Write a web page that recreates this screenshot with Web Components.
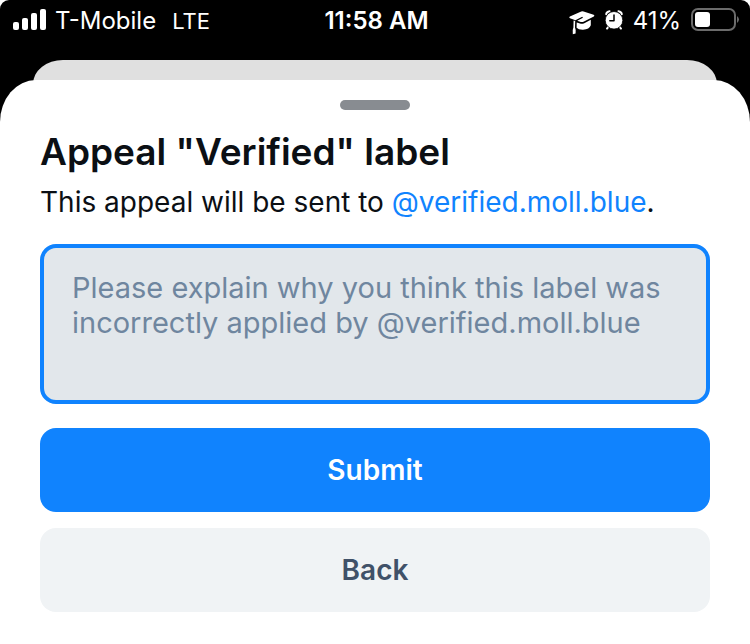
<!DOCTYPE html>
<html lang="en">
<head>
<meta charset="utf-8">
<meta name="viewport" content="width=device-width, initial-scale=1">
<title>Appeal label</title>
<style>
  html { background: #fff; }
  body { margin: 0; font-family: Inter, "Liberation Sans", sans-serif; color: #0b0f14; }
</style>
</head>
<body>
<appeal-screen></appeal-screen>
<script>
const define = (name, html, setup) => {
  const template = document.createElement('template');
  template.innerHTML = html;
  customElements.define(name, class extends HTMLElement {
    constructor() {
      super();
      this.attachShadow({ mode: 'open' }).append(template.content.cloneNode(true));
      if (setup) setup(this);
    }
  });
};

define('signal-icon', `
  <style>:host{display:block} svg{display:block}</style>
  <svg width="34" height="24" viewBox="0 0 34 24" fill="#fff" aria-hidden="true">
    <rect x="0" y="13" width="6" height="8" rx="2"/><rect x="9" y="9" width="6" height="12" rx="2"/>
    <rect x="18" y="4" width="6" height="17" rx="2"/><rect x="27" y="0" width="6" height="21" rx="2"/>
  </svg>`);

define('cap-icon', `
  <style>:host{display:block} svg{display:block}</style>
  <svg width="26" height="28" viewBox="0 -4 26 28" fill="#fff" aria-hidden="true">
    <path d="M12.2.4Q13.4-.1 14.6.4L24.6 3.8Q26 4.5 24.8 5.4L15 10.6Q13 11.5 11 10.8L8.2 9.8 14 6.8 13.2 5.8 6.4 9.2 1 7.2Q-.4 6.4.9 5.5Z"/>
    <path d="M7.7 11.4 11 12.6Q13.2 13.2 15.3 12.2L21.8 8.8V14.2Q20.5 18.4 14 18.7 9.5 18.8 7.6 16.8Z"/>
    <path d="M4.6 9.4 6.2 10 6 16.4Q7 18 6.6 22.6L3.8 23.2Q3.2 18.6 4.4 16.4Z"/>
  </svg>`);

define('alarm-icon', `
  <style>:host{display:block} svg{display:block}</style>
  <svg width="18" height="22" viewBox="0 0 18 22" aria-hidden="true">
    <g fill="none" stroke="#fff" stroke-width="2" stroke-linecap="round"><path d="M1.2 4.2Q1.6 1.6 4.6 1.2M16.8 4.2Q16.4 1.6 13.4 1.2M3.8 16.4 2 18.6M14.2 16.4 16 18.6"/></g>
    <circle cx="9" cy="10.3" r="8.8" fill="#fff" stroke="#000" stroke-width=".8"/>
    <path d="M9 5V10.7H4.8" fill="none" stroke="#000" stroke-width="1.5" stroke-linecap="round" stroke-linejoin="round"/>
  </svg>`);

define('battery-icon', `
  <style>:host{display:block} svg{display:block}</style>
  <svg width="49" height="26" viewBox="0 0 49 26" aria-hidden="true">
    <rect x="1" y="1" width="43" height="21" rx="6" fill="none" stroke="#6b6b6b" stroke-width="2"/>
    <rect x="4" y="4" width="15" height="15" rx="3" fill="#fff"/>
    <path d="M46 8Q50 11.5 46 15Z" fill="#6b6b6b"/>
  </svg>`);

define('status-bar', `
  <style>
    :host{display:grid;grid-template-columns:1fr auto 1fr;align-items:center;height:38px;padding:2px 10px 0 13px;color:#fff;font-size:24px;line-height:28px}
    .side{display:flex;align-items:center}
    .left{gap:8px}
    .network{margin-left:8px;font-size:22px}
    .time{font-weight:600}
    .right{justify-content:flex-end;gap:10px}
  </style>
  <div class="side left"><signal-icon></signal-icon><span>T-Mobile</span><span class="network">LTE</span></div>
  <span class="time">11:58 AM</span>
  <div class="side right"><cap-icon></cap-icon><alarm-icon></alarm-icon><span>41%</span><battery-icon></battery-icon></div>`);

define('sheet-header', `
  <style>
    :host{display:block}
    h1{margin:0;font-size:37px;line-height:48px;font-weight:600}
    p{margin:8px 0 0;font-size:28px;line-height:36px}
    ::slotted(a){color:#1083fe;text-decoration:none}
  </style>
  <h1><slot name="title"></slot></h1><p><slot></slot></p>`);

define('appeal-field', `
  <style>
    :host{display:block}
    textarea{display:block;box-sizing:border-box;width:100%;padding:22px 28px;border:4px solid #1083fe;border-radius:16px;background:#e2e7eb;color:#0b0f14;font:400 29px/35px Inter,"Liberation Sans",sans-serif;height:160px;resize:none;outline:none;overflow:hidden}
    textarea::placeholder{color:#6f869f;opacity:1}
  </style>
  <textarea aria-label="Reason for appeal" placeholder="Please explain why you think this label was incorrectly applied by @verified.moll.blue"></textarea>`);

define('action-button', `
  <style>
    :host{display:block}
    button{display:block;width:100%;padding:24px;border:0;border-radius:16px;font:600 28px/36px Inter,"Liberation Sans",sans-serif;background:#f0f3f5;color:#405168;cursor:pointer}
    :host([primary]) button{background:#1083fe;color:#fff}
  </style>
  <button type="button"><slot></slot></button>`);

define('bottom-sheet', `
  <style>
    :host{display:block}
    .behind{height:24px;margin:0 33px;background:#e0e0e0;border-radius:30px 30px 0 0 / 24px 24px 0 0}
    .sheet{position:relative;margin-top:-4px;padding:20px 40px 32px;background:#fff;border-radius:36px 36px 0 0 / 42px 42px 0 0}
    .grabber{width:70px;height:10px;margin:0 auto 18px;border-radius:5px;background:#888c91}
  </style>
  <div class="behind"></div>
  <main class="sheet"><div class="grabber"></div><slot></slot></main>`);

define('appeal-screen', `
  <style>
    :host{display:block;background:#000;border-radius:9px 9px 0 0}
    status-bar{margin-bottom:20px}
    .actions{display:grid;gap:16px;margin-top:24px}
    appeal-field{margin-top:24px}
  </style>
  <status-bar></status-bar>
  <bottom-sheet>
    <sheet-header><span slot="title">Appeal "Verified" label</span>This appeal will be sent to <a href="#verified">@verified.moll.blue</a>.</sheet-header>
    <appeal-field></appeal-field>
    <div class="actions"><action-button primary>Submit</action-button><action-button>Back</action-button></div>
  </bottom-sheet>`);
</script>
</body>
</html>
